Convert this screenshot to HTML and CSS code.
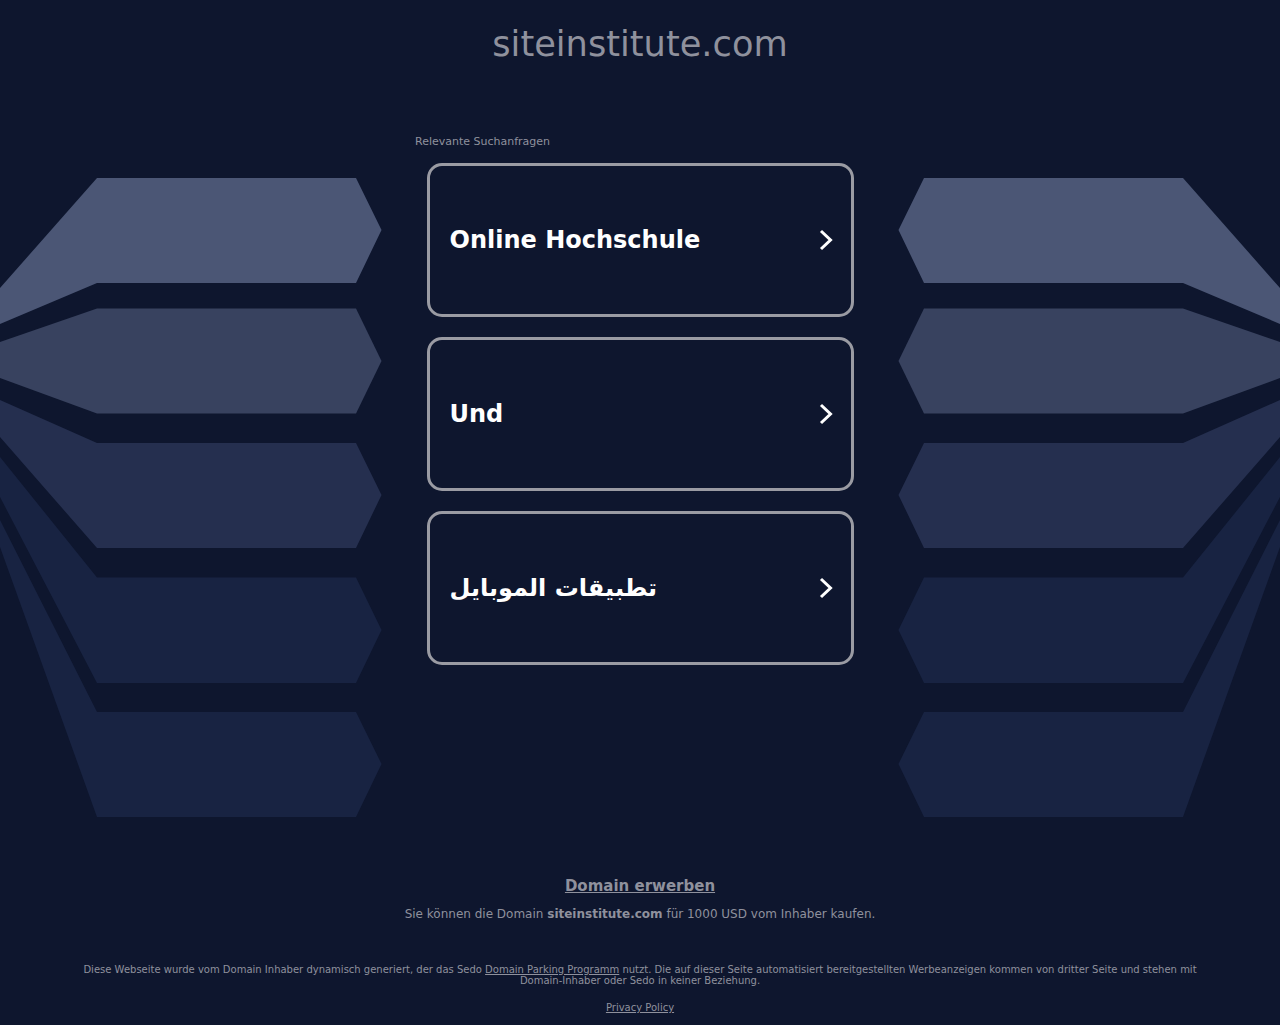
FILE: index.html
```html
<!DOCTYPE html>
<html lang="de">
<head>
    <meta charset="UTF-8">
    <meta name="viewport" content="width=device-width, initial-scale=1.0">
    <title>siteinstitute.com</title>
    <link rel="stylesheet" href="styles.css">
</head>
<body>
    <!-- background shapes, the right half is the left half mirrored -->
    <svg class="backdrop" viewBox="0 0 1280 1025" aria-hidden="true">
        <defs>
            <g id="wing">
                <polygon class="band-1" points="0,288 97,178 356,178 381.500,230 356,283 97,283 0,324"/>
                <polygon class="band-2" points="0,342 97,308.500 356,308.500 381.500,361 356,413.500 97,413.500 0,378"/>
                <polygon class="band-3" points="0,400 97,443 356,443 381.500,495 356,548 97,548 0,437"/>
                <polygon class="band-4" points="0,457 97,577.500 356,577.500 381.500,630 356,683 97,683 0,497"/>
                <polygon class="band-4" points="0,520 97,712 356,712 381.500,764 356,817 97,817 0,547"/>
            </g>
        </defs>
        <use href="#wing"/>
        <use href="#wing" transform="matrix(-1 0 0 1 1280 0)"/>
    </svg>

    <div class="page">
        <h1 class="domain">siteinstitute.com</h1>

        <div class="related">
            <p class="related-label">Relevante Suchanfragen</p>
            <a class="search-card" href="#">
                <span>Online Hochschule</span>
                <svg class="chevron" viewBox="0 0 14 22"><path d="M2 2l9.500 9-9.500 9"/></svg>
            </a>
            <a class="search-card" href="#">
                <span>Und</span>
                <svg class="chevron" viewBox="0 0 14 22"><path d="M2 2l9.500 9-9.500 9"/></svg>
            </a>
            <a class="search-card" href="#">
                <span>تطبيقات الموبايل</span>
                <svg class="chevron" viewBox="0 0 14 22"><path d="M2 2l9.500 9-9.500 9"/></svg>
            </a>
        </div>

        <div class="buy-box">
            <a class="buy-link" href="#">Domain erwerben</a>
            <p class="buy-text">Sie können die Domain <b>siteinstitute.com</b> für 1000 USD vom Inhaber kaufen.</p>
        </div>

        <p class="disclaimer">Diese Webseite wurde vom Domain Inhaber dynamisch generiert, der das Sedo <a href="#">Domain Parking Programm</a> nutzt. Die auf dieser Seite automatisiert bereitgestellten Werbeanzeigen kommen von dritter Seite und stehen mit Domain-Inhaber oder Sedo in keiner Beziehung.</p>
        <a class="privacy" href="#">Privacy Policy</a>
    </div>
</body>
</html>
```

FILE: styles.css
```css
html, body {
    margin: 0;
    height: 100%;
    overflow: hidden;
}

body {
    background-color: #0e162e;
    font-family: "DejaVu Sans", sans-serif;
    color: #8f919d;
}

.backdrop {
    position: absolute;
    top: 0;
    left: 0;
    width: 1280px;
    height: 1025px;
}

.band-1 { fill: #4b5675; }
.band-2 { fill: #38425f; }
.band-3 { fill: #252f4f; }
.band-4 { fill: #182342; }

.page {
    position: relative;
    display: flex;
    flex-direction: column;
    align-items: center;
}

.domain {
    margin: 21px 0 0;
    font-size: 35.2px;
    line-height: 46px;
    font-weight: normal;
}

.related {
    width: 450px;
    margin-top: 68px;
    display: flex;
    flex-direction: column;
    align-items: center;
}

.related-label {
    align-self: flex-start;
    margin: 0 0 15px;
    font-size: 11px;
    line-height: 13px;
}

.search-card {
    box-sizing: border-box;
    width: 427px;
    height: 154px;
    margin-bottom: 20px;
    padding: 0 18px 0 20px;
    display: flex;
    align-items: center;
    justify-content: space-between;
    border: 3px solid #9a9ba3;
    border-radius: 15px;
    background-color: #0e162e;
    color: #fff;
    font-size: 24px;
    font-weight: bold;
    text-decoration: none;
}

.chevron {
    width: 14px;
    height: 22px;
    fill: none;
    stroke: #fff;
    stroke-width: 3;
}

.buy-box {
    margin-top: 191px;
    text-align: center;
}

.buy-link {
    font-size: 15px;
    line-height: 19px;
    font-weight: bold;
    color: #8f919d;
}

.buy-text {
    margin: 11px 0 0;
    font-size: 12px;
    line-height: 14px;
}

.disclaimer {
    width: 1120px;
    margin: 43px 0 0;
    text-align: center;
    font-size: 10px;
    line-height: 11px;
}

.disclaimer a,
.privacy {
    color: #8f919d;
}

.privacy {
    margin-top: 16px;
    font-size: 10px;
    line-height: 12px;
}
```
